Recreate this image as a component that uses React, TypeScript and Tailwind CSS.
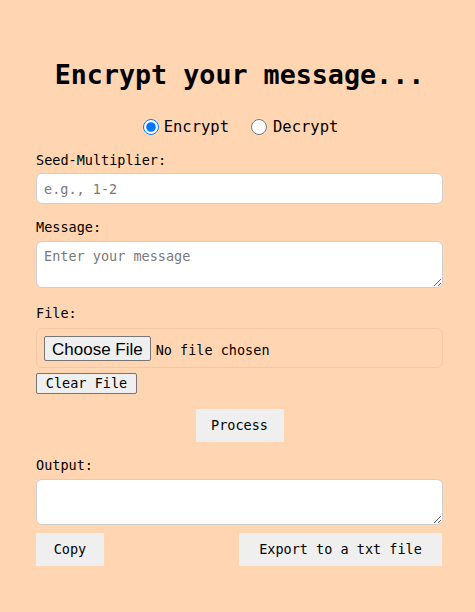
import React from "react";

const mono = "font-['DejaVu_Sans_Mono','Liberation_Mono',monospace]";

export default function App() {
  return (
    <div className={`min-h-[612px] w-full bg-[#ffd6b1] ${mono} text-black`}>
      <div className="ml-[36px] flex w-[407px] flex-col pt-[59px]">
        <h1 className="h-[32px] text-center text-[26.7px] font-bold leading-[32px]">Encrypt your message...</h1>
        <div className="mt-[26px] flex h-[20px] items-center justify-center pl-[2px] text-[15.5px] leading-[20px]">
          <label className="flex items-center">
            <input type="radio" name="mode" defaultChecked className="m-0 h-[16px] w-[16px]" />
            <span className="ml-[5px]">Encrypt</span>
          </label>
          <label className="ml-[22px] flex items-center">
            <input type="radio" name="mode" className="m-0 h-[16px] w-[16px]" />
            <span className="ml-[6px]">Decrypt</span>
          </label>
        </div>
        <label className="mt-[13px] h-[20px] text-[13.5px] leading-[20px]">Seed-Multiplier:</label>
        <input
          type="text"
          placeholder="e.g., 1-2"
          className="mt-[3px] h-[31px] w-full rounded-[6px] border border-[#cfcfcf] bg-white px-[7px] text-[13.5px] outline-none placeholder:text-[#7a7a7a]"
        />
        <label className="mt-[13px] h-[20px] text-[13.5px] leading-[20px]">Message:</label>
        <textarea
          placeholder="Enter your message"
          className="mt-[4px] block h-[47px] w-full rounded-[6px] border border-[#cfcfcf] bg-white px-[7px] py-[5px] text-[13.5px] leading-[18px] outline-none placeholder:text-[#7a7a7a]"
        />
        <label className="mt-[15px] h-[20px] text-[13.5px] leading-[20px]">File:</label>
        <div className="mt-[5px] flex h-[40px] items-center rounded-[6px] border border-[#efc9a6] px-[7px]">
          <input
            type="file"
            className="text-[13.5px] file:mr-[5px] file:h-[25px] file:rounded-[2px] file:border file:border-solid file:border-[#767676] file:bg-[#efefef] file:px-[7px] file:py-0 file:font-['Liberation_Sans',Arial,sans-serif] file:text-[17px] file:text-black"
          />
        </div>
        <div className="mt-[5px] flex">
          <button className="h-[21px] w-[101px] rounded-[2px] border border-[#767676] bg-[#efefef] text-[13.5px] leading-[19px]">
            Clear File
          </button>
        </div>
        <div className="mt-[15px] flex justify-center">
          <button className="h-[33px] w-[88px] bg-[#efefef] text-[13.5px]">Process</button>
        </div>
        <label className="mt-[13px] h-[20px] text-[13.5px] leading-[20px]">Output:</label>
        <textarea className="mt-[4px] block h-[46px] w-full rounded-[6px] border border-[#cfcfcf] bg-white px-[7px] py-[5px] text-[13.5px] outline-none" />
        <div className="mt-[8px] flex justify-between pr-[1px]">
          <button className="h-[33px] w-[68px] bg-[#efefef] text-[13.5px]">Copy</button>
          <button className="h-[33px] w-[203px] bg-[#efefef] text-[13.5px]">Export to a txt file</button>
        </div>
      </div>
    </div>
  );
}
